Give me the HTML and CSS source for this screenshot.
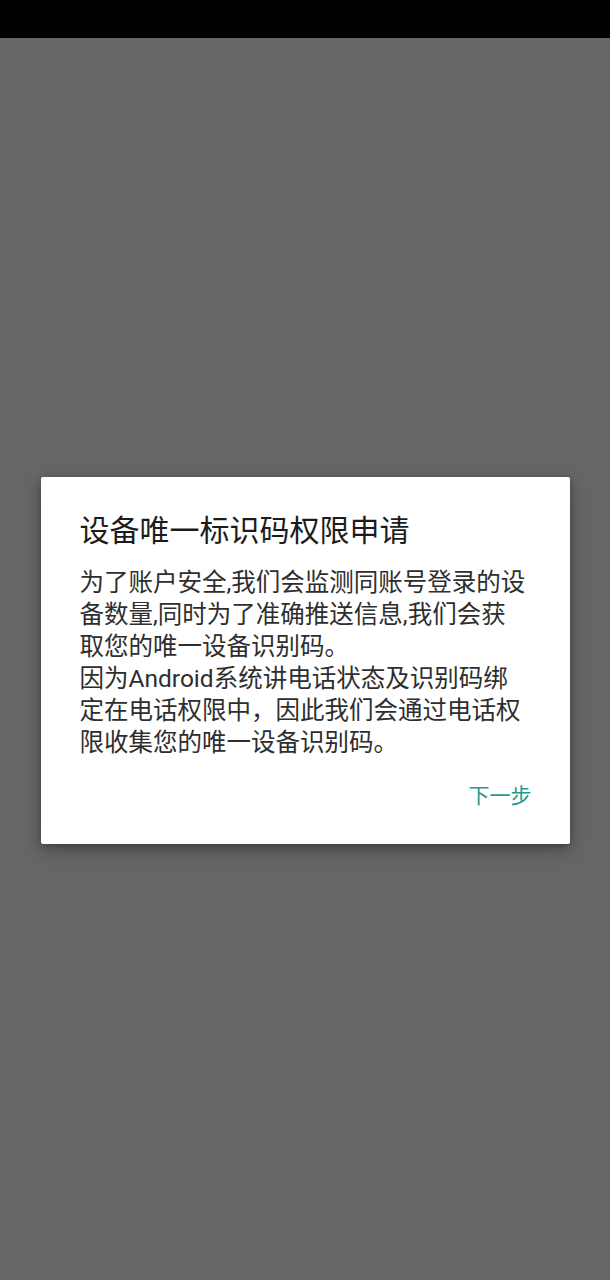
FILE: index.html
```html
<!DOCTYPE html>
<html lang="zh-CN">
<head>
<meta charset="utf-8">
<title>设备唯一标识码权限申请</title>
<link rel="stylesheet" href="styles.css">
</head>
<body>
<div class="status-bar"></div>
<main class="screen">
  <section class="dialog">
    <h1 class="dialog-title">设备唯一标识码权限申请</h1>
    <p class="dialog-body">为了账户安全,我们会监测同账号登录的设备数量,同时为了准确推送信息,我们会获取您的唯一设备识别码。<br>因为Android系统讲电话状态及识别码绑定在电话权限中，因此我们会通过电话权限收集您的唯一设备识别码。</p>
    <div class="dialog-actions">
      <button class="btn-next" type="button">下一步</button>
    </div>
  </section>
</main>
</body>
</html>
```

FILE: styles.css
```css
html, body {
  margin: 0;
  padding: 0;
  height: 100%;
}
body {
  background: #666666;
  font-family: "Roboto", "Noto Sans CJK SC", sans-serif;
  display: flex;
  flex-direction: column;
}
.status-bar {
  height: 38px;
  background: #000000;
  flex: none;
}
.screen {
  flex: 1;
  display: flex;
  align-items: center;
  justify-content: center;
  padding-top: 3px;
}
.dialog {
  width: 529px;
  box-sizing: border-box;
  background: #ffffff;
  border-radius: 2px;
  box-shadow: 0 6px 18px rgba(0, 0, 0, 0.28), 0 2px 6px rgba(0, 0, 0, 0.2);
  padding: 34px 40px 36px 39px;
}
.dialog-title {
  margin: 0;
  font-size: 30px;
  line-height: 40px;
  font-weight: 400;
  color: #1c1c1c;
}
.dialog-body {
  margin: 16px 0 0;
  width: 450px;
  font-size: 24.5px;
  line-height: 32px;
  color: #2e2e2e;
}
.dialog-actions {
  margin-top: 25px;
  display: flex;
  justify-content: flex-end;
}
.btn-next {
  border: 0;
  background: none;
  padding: 0;
  margin: 0 -2px 0 0;
  font-family: inherit;
  font-size: 21px;
  line-height: 24px;
  color: #26998b;
  cursor: pointer;
}
```
